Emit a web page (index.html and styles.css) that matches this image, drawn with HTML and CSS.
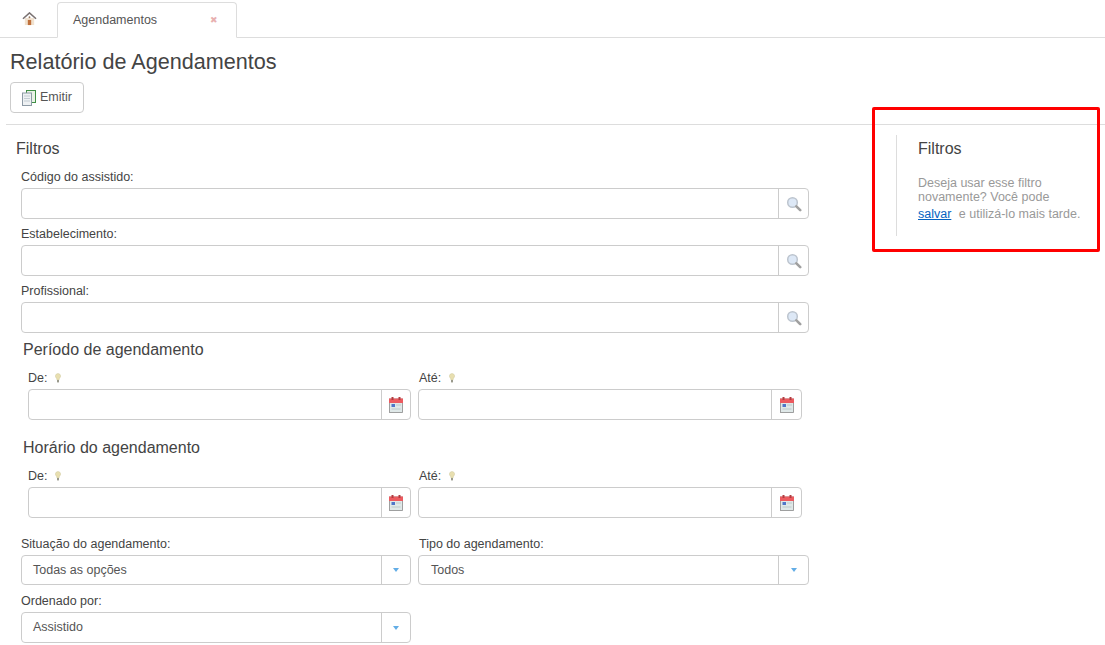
FILE: index.html
```html
<!DOCTYPE html>
<html lang="pt-BR">
<head>
    <meta charset="UTF-8">
    <title>Relatório de Agendamentos</title>
    <link rel="stylesheet" href="styles.css">
</head>
<body>
    <svg class="defs" width="0" height="0">
        <defs>
            <symbol id="ico-search" viewBox="0 0 16 16">
                <circle cx="6.5" cy="6.5" r="4.8" fill="#dde8f6" stroke="#bcc4ce" stroke-width="1.5"/>
                <path d="M10.4 10.4l3.8 3.8" stroke="#a0a0a0" stroke-width="2.6" stroke-linecap="round"/>
            </symbol>
            <symbol id="ico-cal" viewBox="0 0 14 16">
                <rect x="0.5" y="2" width="13" height="13.5" fill="#dfe8e8" stroke="#8a8a8a" stroke-width="0.8"/>
                <rect x="0" y="1.5" width="14" height="4.5" fill="#ec5a5f"/>
                <rect x="2.5" y="0" width="2" height="3" fill="#b23c40"/>
                <rect x="9.5" y="0" width="2" height="3" fill="#b23c40"/>
                <rect x="2.5" y="7" width="3.5" height="3" fill="#4f76c8"/>
                <path d="M7 8h5M2.5 12h9" stroke="#bccaca" stroke-width="1"/>
            </symbol>
            <symbol id="ico-bulb" viewBox="0 0 6 10">
                <path d="M3 0.5a2.6 2.6 0 0 1 1.5 4.7L4 7H2l-.5-1.8A2.6 2.6 0 0 1 3 .5z" fill="#e8dfb0" stroke="#cfc89e" stroke-width="0.5"/>
                <rect x="2" y="7" width="2" height="2.4" fill="#9a9a8c"/>
            </symbol>
        </defs>
    </svg>

    <header class="tabs">
        <a class="tab-home" href="#">
            <svg width="15" height="14" viewBox="0 0 16 15">
                <path d="M3 6.5h10V14H3z" fill="#f1e2cf"/>
                <path d="M6.2 8.5h3.6V14H6.2z" fill="#c0703c"/>
                <circle cx="8" cy="5.6" r="1" fill="#9a7a60"/>
                <path d="M1 7.2L8 1l7 6.2" fill="none" stroke="#7a7272" stroke-width="1.7"/>
            </svg>
        </a>
        <div class="tab-active">
            <span>Agendamentos</span>
            <span class="tab-close">&#10006;</span>
        </div>
    </header>

    <div class="page-head">
        <h1>Relatório de Agendamentos</h1>
        <button class="btn" type="button">
            <svg width="14" height="16" viewBox="0 0 14 16">
                <rect x="4.5" y="0.5" width="9" height="12" fill="#e9f3e6" stroke="#3f8f45"/>
                <rect x="0.5" y="3" width="9" height="12.5" fill="#eef1f3" stroke="#8d9aa5"/>
                <path d="M2 6h6M2 8.5h6M2 11h6" stroke="#c3ccd3" stroke-width="1"/>
            </svg>
            <span class="btn-text">Emitir</span>
        </button>
    </div>

    <div class="content">
        <form class="filters">
            <h2 class="filters-title">Filtros</h2>

            <div class="field">
                <label>Código do assistido:</label>
                <div class="input-group">
                    <input type="text">
                    <span class="addon"><svg width="16" height="16"><use href="#ico-search"/></svg></span>
                </div>
            </div>
            <div class="field">
                <label>Estabelecimento:</label>
                <div class="input-group">
                    <input type="text">
                    <span class="addon"><svg width="16" height="16"><use href="#ico-search"/></svg></span>
                </div>
            </div>
            <div class="field">
                <label>Profissional:</label>
                <div class="input-group">
                    <input type="text">
                    <span class="addon"><svg width="16" height="16"><use href="#ico-search"/></svg></span>
                </div>
            </div>

            <h3 class="group-title">Período de agendamento</h3>
            <div class="date-row">
                <div class="field">
                    <label>De: <svg class="bulb" width="6" height="10"><use href="#ico-bulb"/></svg></label>
                    <div class="input-group">
                        <input type="text">
                        <span class="addon"><svg width="14" height="16"><use href="#ico-cal"/></svg></span>
                    </div>
                </div>
                <div class="field">
                    <label>Até: <svg class="bulb" width="6" height="10"><use href="#ico-bulb"/></svg></label>
                    <div class="input-group">
                        <input type="text">
                        <span class="addon"><svg width="14" height="16"><use href="#ico-cal"/></svg></span>
                    </div>
                </div>
            </div>

            <h3 class="group-title">Horário do agendamento</h3>
            <div class="date-row">
                <div class="field">
                    <label>De: <svg class="bulb" width="6" height="10"><use href="#ico-bulb"/></svg></label>
                    <div class="input-group">
                        <input type="text">
                        <span class="addon"><svg width="14" height="16"><use href="#ico-cal"/></svg></span>
                    </div>
                </div>
                <div class="field">
                    <label>Até: <svg class="bulb" width="6" height="10"><use href="#ico-bulb"/></svg></label>
                    <div class="input-group">
                        <input type="text">
                        <span class="addon"><svg width="14" height="16"><use href="#ico-cal"/></svg></span>
                    </div>
                </div>
            </div>

            <div class="select-row">
                <div class="field">
                    <label>Situação do agendamento:</label>
                    <div class="select-box"><span class="value">Todas as opções</span><span class="addon"><i class="caret"></i></span></div>
                </div>
                <div class="field">
                    <label>Tipo do agendamento:</label>
                    <div class="select-box"><span class="value">Todos</span><span class="addon"><i class="caret"></i></span></div>
                </div>
                <div class="field">
                    <label>Ordenado por:</label>
                    <div class="select-box"><span class="value">Assistido</span><span class="addon"><i class="caret"></i></span></div>
                </div>
            </div>
        </form>

        <aside class="side">
            <h2>Filtros</h2>
            <p>Deseja usar esse filtro novamente? Você pode <a href="#">salvar</a> <span class="after-link">e utilizá-lo mais tarde.</span></p>
        </aside>

        <div class="highlight"></div>
    </div>
</body>
</html>
```

FILE: styles.css
```css
* {
    box-sizing: border-box;
}

html, body {
    height: 100%;
    overflow: hidden;
}

body {
    margin: 0;
    font-family: "Liberation Sans", Arial, sans-serif;
    font-size: 12.5px;
    color: #333;
    background-color: #fff;
}

.defs {
    position: absolute;
}

/* Tab bar */
.tabs {
    display: flex;
    align-items: flex-end;
    height: 38px;
    padding-left: 7px;
    border-bottom: 1px solid #ddd;
}

.tab-home {
    display: flex;
    justify-content: center;
    align-items: center;
    width: 50px;
    height: 37px;
    padding: 1px 5px 0 0;
}

.tab-active {
    display: flex;
    justify-content: space-between;
    align-items: center;
    width: 180px;
    height: 36px;
    margin-bottom: -1px;
    padding: 0 18px 0 15px;
    color: #555;
    background-color: #fff;
    border: 1px solid #ddd;
    border-bottom-color: #fff;
    border-radius: 4px 4px 0 0;
}

.tab-close {
    font-size: 9px;
    color: #e8b0b0;
}

/* Page heading */
.page-head {
    padding: 0 10px;
}

h1 {
    margin: 0;
    padding-top: 12px;
    height: 44px;
    font-size: 21.6px;
    line-height: 24px;
    font-weight: normal;
    color: #444;
}

.btn {
    display: flex;
    align-items: center;
    gap: 4px;
    width: 74px;
    height: 31px;
    padding: 0 0 0 11px;
    font-family: inherit;
    font-size: 12.5px;
    color: #555;
    background-color: #fff;
    border: 1px solid #ccc;
    border-radius: 4px;
}

.btn-text {
    padding-bottom: 2px;
}

/* Form area */
.content {
    position: relative;
    display: flex;
    margin: 11px 0 0 6px;
    border-top: 1px solid #ddd;
}

.filters {
    width: 803px;
    padding-left: 10px;
}

.filters-title {
    margin: 15px 0 0;
    height: 29px;
    font-size: 16px;
    line-height: 18px;
    font-weight: normal;
    color: #444;
}

.field {
    padding-left: 5px;
}

.field label {
    display: block;
    height: 19px;
    line-height: 16px;
    color: #444;
}

.input-group,
.select-box {
    display: flex;
    height: 31px;
    margin-bottom: 7px;
    background-color: #fff;
    border: 1px solid #ccc;
    border-radius: 4px;
}

.input-group input {
    flex: 1;
    min-width: 0;
    border: none;
    outline: none;
    background: none;
}

.addon {
    display: flex;
    justify-content: center;
    align-items: center;
    flex: none;
    width: 30px;
    border-left: 1px solid #ccc;
}

.group-title {
    margin: 0 0 0 7px;
    padding-top: 1px;
    height: 30px;
    font-size: 16px;
    line-height: 18px;
    font-weight: normal;
    color: #444;
}

.date-row {
    display: grid;
    grid-template-columns: 395px 384px;
    padding-left: 7px;
    margin-bottom: 18px;
}

.date-row .field:first-child {
    padding-right: 7px;
}

.date-row .field:first-child .addon,
.select-row .field:nth-child(odd) .addon {
    width: 29px;
}

.date-row .field:last-child {
    padding-left: 0;
}

.date-row .field:last-child label,
.select-row .field:nth-child(even) label {
    padding-left: 1px;
}

.date-row .input-group {
    margin-bottom: 0;
}

.bulb {
    margin-left: 4px;
    vertical-align: -1px;
}

.select-row {
    display: grid;
    grid-template-columns: 402px 391px;
}

.select-row .field:nth-child(odd) {
    padding-right: 7px;
}

.select-row .field:nth-child(even) {
    padding-left: 0;
}

.select-row .field:nth-child(even) .value {
    padding-left: 12px;
}

.select-box {
    height: 30px;
    margin-bottom: 8px;
}

.select-row .field:nth-child(3) .select-box {
    height: 31px;
    margin-bottom: 0;
}

.value {
    flex: 1;
    padding: 0 11px;
    line-height: 28px;
    color: #555;
}

.caret {
    width: 0;
    height: 0;
    border-left: 3.5px solid transparent;
    border-right: 3.5px solid transparent;
    border-top: 4px solid #62ade6;
}

/* Saved filters note */
.side {
    width: 187px;
    height: 101px;
    margin: 10px 0 0 87px;
    padding: 5px 0 0 21px;
    flex: none;
    border-left: 1px solid #ddd;
}

.side h2 {
    margin: 0 0 18px;
    font-size: 16px;
    line-height: 18px;
    font-weight: normal;
    color: #444;
}

.side p {
    margin: 0;
    line-height: 14px;
    color: #999;
}

.side a {
    color: #0563c1;
    line-height: 20px;
}

.after-link {
    margin-left: 4px;
}

/* Red marker round the note */
.highlight {
    position: absolute;
    left: 866px;
    top: -18px;
    width: 228px;
    height: 145px;
    border: 3px solid #f00;
    border-radius: 2px;
}
```
